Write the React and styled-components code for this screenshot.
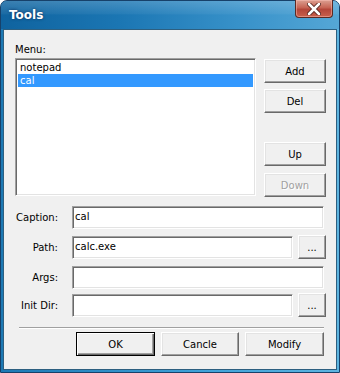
import React from 'react';
import styled, { createGlobalStyle } from 'styled-components';

const GlobalStyle = createGlobalStyle`
  html, body {
    margin: 0;
    padding: 0;
    background: #ffffff;
  }
  body {
    font-family: 'DejaVu Sans', 'Liberation Sans', sans-serif;
    font-size: 10px;
    color: #000;
  }
`;

const Window = styled.div`
  box-sizing: border-box;
  width: 340px;
  height: 373px;
  display: flex;
  flex-direction: column;
  border: 1px solid #17416a;
  border-radius: 7px 7px 0 0;
  padding: 0 2px 2px 2px;
  background: linear-gradient(90deg, #1d79b4 0%, #3fa2d8 60%, #5db4e0 100%);
`;

const TitleBar = styled.div`
  height: 28px;
  margin: 0 -2px;
  padding: 0 6px 0 8px;
  display: flex;
  align-items: flex-start;
  justify-content: space-between;
  border-radius: 6px 6px 0 0;
  background:
    linear-gradient(180deg, rgba(255,255,255,0.18) 0%, rgba(255,255,255,0.05) 45%, rgba(0,0,0,0) 50%),
    linear-gradient(90deg, #0f639f 0%, #1b76b3 35%, #3791c9 70%, #55a7d6 100%);
`;

const Title = styled.span`
  margin-top: 7px;
  font-family: 'DejaVu Sans', 'Liberation Sans', sans-serif;
  font-weight: bold;
  font-size: 12px;
  color: #ffffff;
  text-shadow: 0 0 3px rgba(0, 0, 40, 0.6);
`;

const CloseButton = styled.div`
  box-sizing: border-box;
  width: 38px;
  height: 18px;
  margin-top: -1px;
  display: flex;
  align-items: center;
  justify-content: center;
  border: 1px solid #5a2a24;
  border-top: none;
  border-radius: 0 0 4px 4px;
  background: linear-gradient(180deg, #dca092 0%, #c66454 45%, #b4463a 55%, #c8604c 100%);
  box-shadow: inset 0 0 0 1px rgba(255, 200, 190, 0.45);
`;

const Client = styled.div`
  flex: 1;
  display: flex;
  flex-direction: column;
  border: 1px solid #2d5f80;
  background: #f0f0f0;
  padding: 13px 9px 0 11px;
`;

const Label = styled.div`
  height: 13px;
  line-height: 13px;
  margin-bottom: 2px;
`;

const TopRow = styled.div`
  display: flex;
  gap: 8px;
`;

const ListBox = styled.div`
  box-sizing: border-box;
  width: 241px;
  height: 138px;
  background: #ffffff;
  border: 1px solid;
  border-color: #a0a0a0 #ffffff #ffffff #a0a0a0;
  box-shadow: inset 1px 1px #696969, inset -1px -1px #e3e3e3;
  padding: 2px 2px;
`;

const ListItem = styled.div`
  height: 13px;
  line-height: 13px;
  padding-left: 2px;
  color: ${p => (p.$selected ? '#ffffff' : '#000000')};
  background: ${p => (p.$selected ? '#3399ff' : 'transparent')};
`;

const ButtonColumn = styled.div`
  display: flex;
  flex-direction: column;
  padding-top: 1px;
`;

const Button = styled.div`
  box-sizing: border-box;
  width: ${p => p.$width || 62}px;
  height: 24px;
  margin-top: ${p => p.$top || 0}px;
  display: flex;
  align-items: center;
  justify-content: center;
  background: #f0f0f0;
  border: 1px solid;
  border-color: #ffffff #696969 #696969 #ffffff;
  box-shadow: inset -1px -1px #a0a0a0, inset 1px 1px #e3e3e3;
  color: ${p => (p.$disabled ? '#a0a0a0' : '#000000')};
  text-shadow: ${p => (p.$disabled ? '1px 1px #ffffff' : 'none')};
`;

const DefaultButton = styled(Button)`
  border-color: #000000;
  box-shadow: inset 1px 1px #ffffff, inset -1px -1px #696969, inset -2px -2px #a0a0a0;
`;

const Fields = styled.div`
  margin-top: 8px;
  display: flex;
  flex-direction: column;
  padding-right: 1px;
`;

const FieldRow = styled.div`
  display: flex;
  align-items: center;
  height: 24px;
  margin-top: ${p => p.$top || 0}px;
`;

const FieldLabel = styled.div`
  width: 43px;
  margin-right: 14px;
  text-align: right;
`;

const TextBox = styled.div`
  box-sizing: border-box;
  flex: 1;
  height: 23px;
  margin-right: ${p => (p.$browse ? 5 : 2)}px;
  padding: 3px 2px;
  line-height: 13px;
  background: #ffffff;
  border: 1px solid;
  border-color: #a0a0a0 #ffffff #ffffff #a0a0a0;
  box-shadow: inset 1px 1px #696969, inset -1px -1px #e3e3e3;
`;

const Separator = styled.div`
  margin: 10px 3px 0 4px;
  height: 0;
  border-top: 1px solid #a0a0a0;
  border-bottom: 1px solid #ffffff;
`;

const BottomRow = styled.div`
  margin-top: 3px;
  padding-right: 3px;
  display: flex;
  justify-content: flex-end;
  gap: 6px;
`;

function CloseGlyph() {
  return (
    <svg width="14" height="12" viewBox="0 0 14 12">
      <path d="M2 1 L12 11 M12 1 L2 11" stroke="#4a1a14" strokeWidth="4.2" strokeLinecap="round" />
      <path d="M2 1 L12 11 M12 1 L2 11" stroke="#ffffff" strokeWidth="2.6" strokeLinecap="round" />
    </svg>
  );
}

const items = [
  { name: 'notepad', selected: false },
  { name: 'cal', selected: true },
];

const fields = [
  { label: 'Caption:', value: 'cal', browse: false, top: 0 },
  { label: 'Path:', value: 'calc.exe', browse: true, top: 6 },
  { label: 'Args:', value: '', browse: false, top: 6 },
  { label: 'Init Dir:', value: '', browse: true, top: 4 },
];

export default function App() {
  return (
    <>
      <GlobalStyle />
      <Window>
        <TitleBar>
          <Title>Tools</Title>
          <CloseButton>
            <CloseGlyph />
          </CloseButton>
        </TitleBar>
        <Client>
          <Label>Menu:</Label>
          <TopRow>
            <ListBox>
              {items.map(item => (
                <ListItem key={item.name} $selected={item.selected}>{item.name}</ListItem>
              ))}
            </ListBox>
            <ButtonColumn>
              <Button>Add</Button>
              <Button $top={6}>Del</Button>
              <Button $top={29}>Up</Button>
              <Button $top={7} $disabled>Down</Button>
            </ButtonColumn>
          </TopRow>
          <Fields>
            {fields.map(f => (
              <FieldRow key={f.label} $top={f.top}>
                <FieldLabel>{f.label}</FieldLabel>
                <TextBox $browse={f.browse}>{f.value}</TextBox>
                {f.browse && <Button $width={28}>...</Button>}
              </FieldRow>
            ))}
          </Fields>
          <Separator />
          <BottomRow>
            <DefaultButton $width={79}>OK</DefaultButton>
            <Button $width={78}>Cancle</Button>
            <Button $width={79}>Modify</Button>
          </BottomRow>
        </Client>
      </Window>
    </>
  );
}
